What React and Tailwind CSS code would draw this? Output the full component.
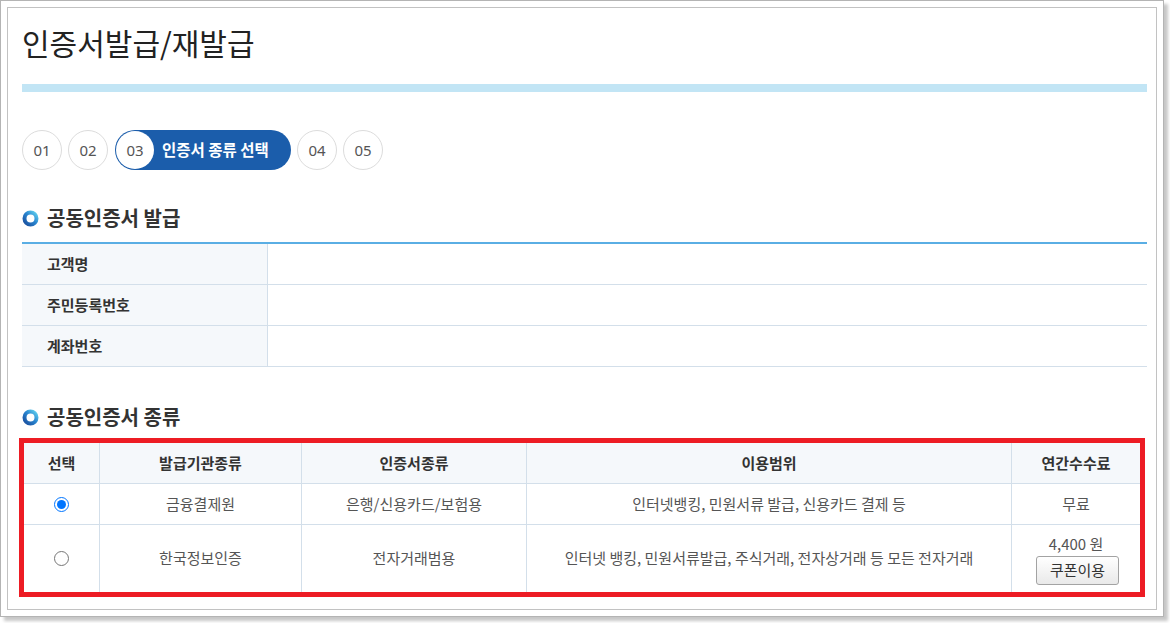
import React from "react";

const KR = { fontFamily: '"Noto Sans CJK KR", "Noto Sans", sans-serif' };

function RingIcon() {
  return (
    <svg width="17" height="17" viewBox="0 0 17 17" className="shrink-0">
      <defs>
        <linearGradient id="rg" x1="0" y1="1" x2="1" y2="0">
          <stop offset="0" stopColor="#1a4f9e" />
          <stop offset="0.55" stopColor="#2a86d0" />
          <stop offset="1" stopColor="#5fd0ee" />
        </linearGradient>
      </defs>
      <circle cx="8.5" cy="8.5" r="6" fill="none" stroke="url(#rg)" strokeWidth="4" />
    </svg>
  );
}

function Heading({ children }) {
  return (
    <div className="flex items-center h-[24px] gap-[8px]">
      <RingIcon />
      <span className="text-[20px] font-semibold text-[#333] leading-[24px]">{children}</span>
    </div>
  );
}

function Step({ n }) {
  return (
    <div className="w-[40px] h-[40px] rounded-full border border-[#dcdcdc] flex items-center justify-center text-[15px] text-[#555]" style={{ fontFamily: '"Noto Sans", sans-serif' }}>
      {n}
    </div>
  );
}

export default function App() {
  const infoRows = ["고객명", "주민등록번호", "계좌번호"];
  return (
    <div className="w-[1170px] h-[623px] bg-white" style={KR}>
      <div className="w-[1164px] h-[617px] border border-[#b4b4b4] shadow-[4px_4px_3px_rgba(0,0,0,0.22)] p-[6px]">
        <div className="h-full border border-[#c2c2c2] pl-[14px] pr-[9px] pt-[17px]">
          <h1 className="h-[34px] leading-[34px] text-[30px] text-[#222] font-normal">인증서발급/재발급</h1>
          <div className="mt-[25px] h-[8px] bg-[#c2e5f5]" />

          <div className="mt-[38px] flex items-center gap-[6px]">
            <Step n="01" />
            <Step n="02" />
            <div className="h-[40px] w-[176px] rounded-full bg-[#1b5dab] flex items-center pl-[1px] ml-[1px]">
              <div className="w-[38px] h-[38px] rounded-full bg-white flex items-center justify-center text-[15px] text-[#555]" style={{ fontFamily: '"Noto Sans", sans-serif' }}>
                03
              </div>
              <span className="ml-[8px] text-[15.5px] font-bold text-white">인증서 종류 선택</span>
            </div>
            <Step n="04" />
            <Step n="05" />
          </div>

          <div className="mt-[36px]">
            <Heading>공동인증서 발급</Heading>
          </div>

          <div className="mt-[12px] border-t-2 border-[#5aaee4]">
            {infoRows.map((r) => (
              <div key={r} className="flex h-[41px] border-b border-[#d3dfea]">
                <div className="w-[246px] bg-[#f5f8fb] border-r border-[#d3dfea] flex items-center pl-[25px] text-[15px] font-semibold text-[#333]">
                  {r}
                </div>
                <div className="flex-1" />
              </div>
            ))}
          </div>

          <div className="mt-[38px]">
            <Heading>공동인증서 종류</Heading>
          </div>

          <div className="mt-[9px] ml-[-3px] w-[1126px] border-[5px] border-[#ed1c24]">
            <div className="grid grid-cols-[76px_202px_225px_485px_128px] text-[15px] text-center">
              {["선택", "발급기관종류", "인증서종류", "이용범위", "연간수수료"].map((h, i) => (
                <div
                  key={h}
                  className={`h-[41px] flex items-center justify-center bg-[#f5f8fb] font-semibold text-[#333] border-b border-[#d3dfea] ${i < 4 ? "border-r" : ""}`}
                >
                  {h}
                </div>
              ))}

              <div className="h-[41px] flex items-center justify-center border-b border-r border-[#d3dfea]">
                <input type="radio" name="cert" defaultChecked className="w-[15px] h-[15px] m-0" />
              </div>
              <div className="h-[41px] flex items-center justify-center border-b border-r border-[#d3dfea] text-[#555]">금융결제원</div>
              <div className="h-[41px] flex items-center justify-center border-b border-r border-[#d3dfea] text-[#555]">은행/신용카드/보험용</div>
              <div className="h-[41px] flex items-center justify-center border-b border-r border-[#d3dfea] text-[#555]">인터넷뱅킹, 민원서류 발급, 신용카드 결제 등</div>
              <div className="h-[41px] flex items-center justify-center border-b border-[#d3dfea] text-[#555]">무료</div>

              <div className="h-[67px] flex items-center justify-center border-r border-[#d3dfea]">
                <input type="radio" name="cert" className="w-[15px] h-[15px] m-0" />
              </div>
              <div className="h-[67px] flex items-center justify-center border-r border-[#d3dfea] text-[#555]">한국정보인증</div>
              <div className="h-[67px] flex items-center justify-center border-r border-[#d3dfea] text-[#555]">전자거래범용</div>
              <div className="h-[67px] flex items-center justify-center border-r border-[#d3dfea] text-[#555]">인터넷 뱅킹, 민원서류발급, 주식거래, 전자상거래 등 모든 전자거래</div>
              <div className="h-[67px] flex flex-col items-center justify-center text-[#555]">
                <div className="leading-[18px] mt-[2px]">4,400 원</div>
                <div className="mt-[3px] ml-[3px] w-[83px] h-[29px] border border-[#a3a3a3] rounded-[3px] bg-gradient-to-b from-white to-[#e9e9e9] flex items-center justify-center text-[15px] text-[#333]">
                  쿠폰이용
                </div>
              </div>
            </div>
          </div>
        </div>
      </div>
    </div>
  );
}
